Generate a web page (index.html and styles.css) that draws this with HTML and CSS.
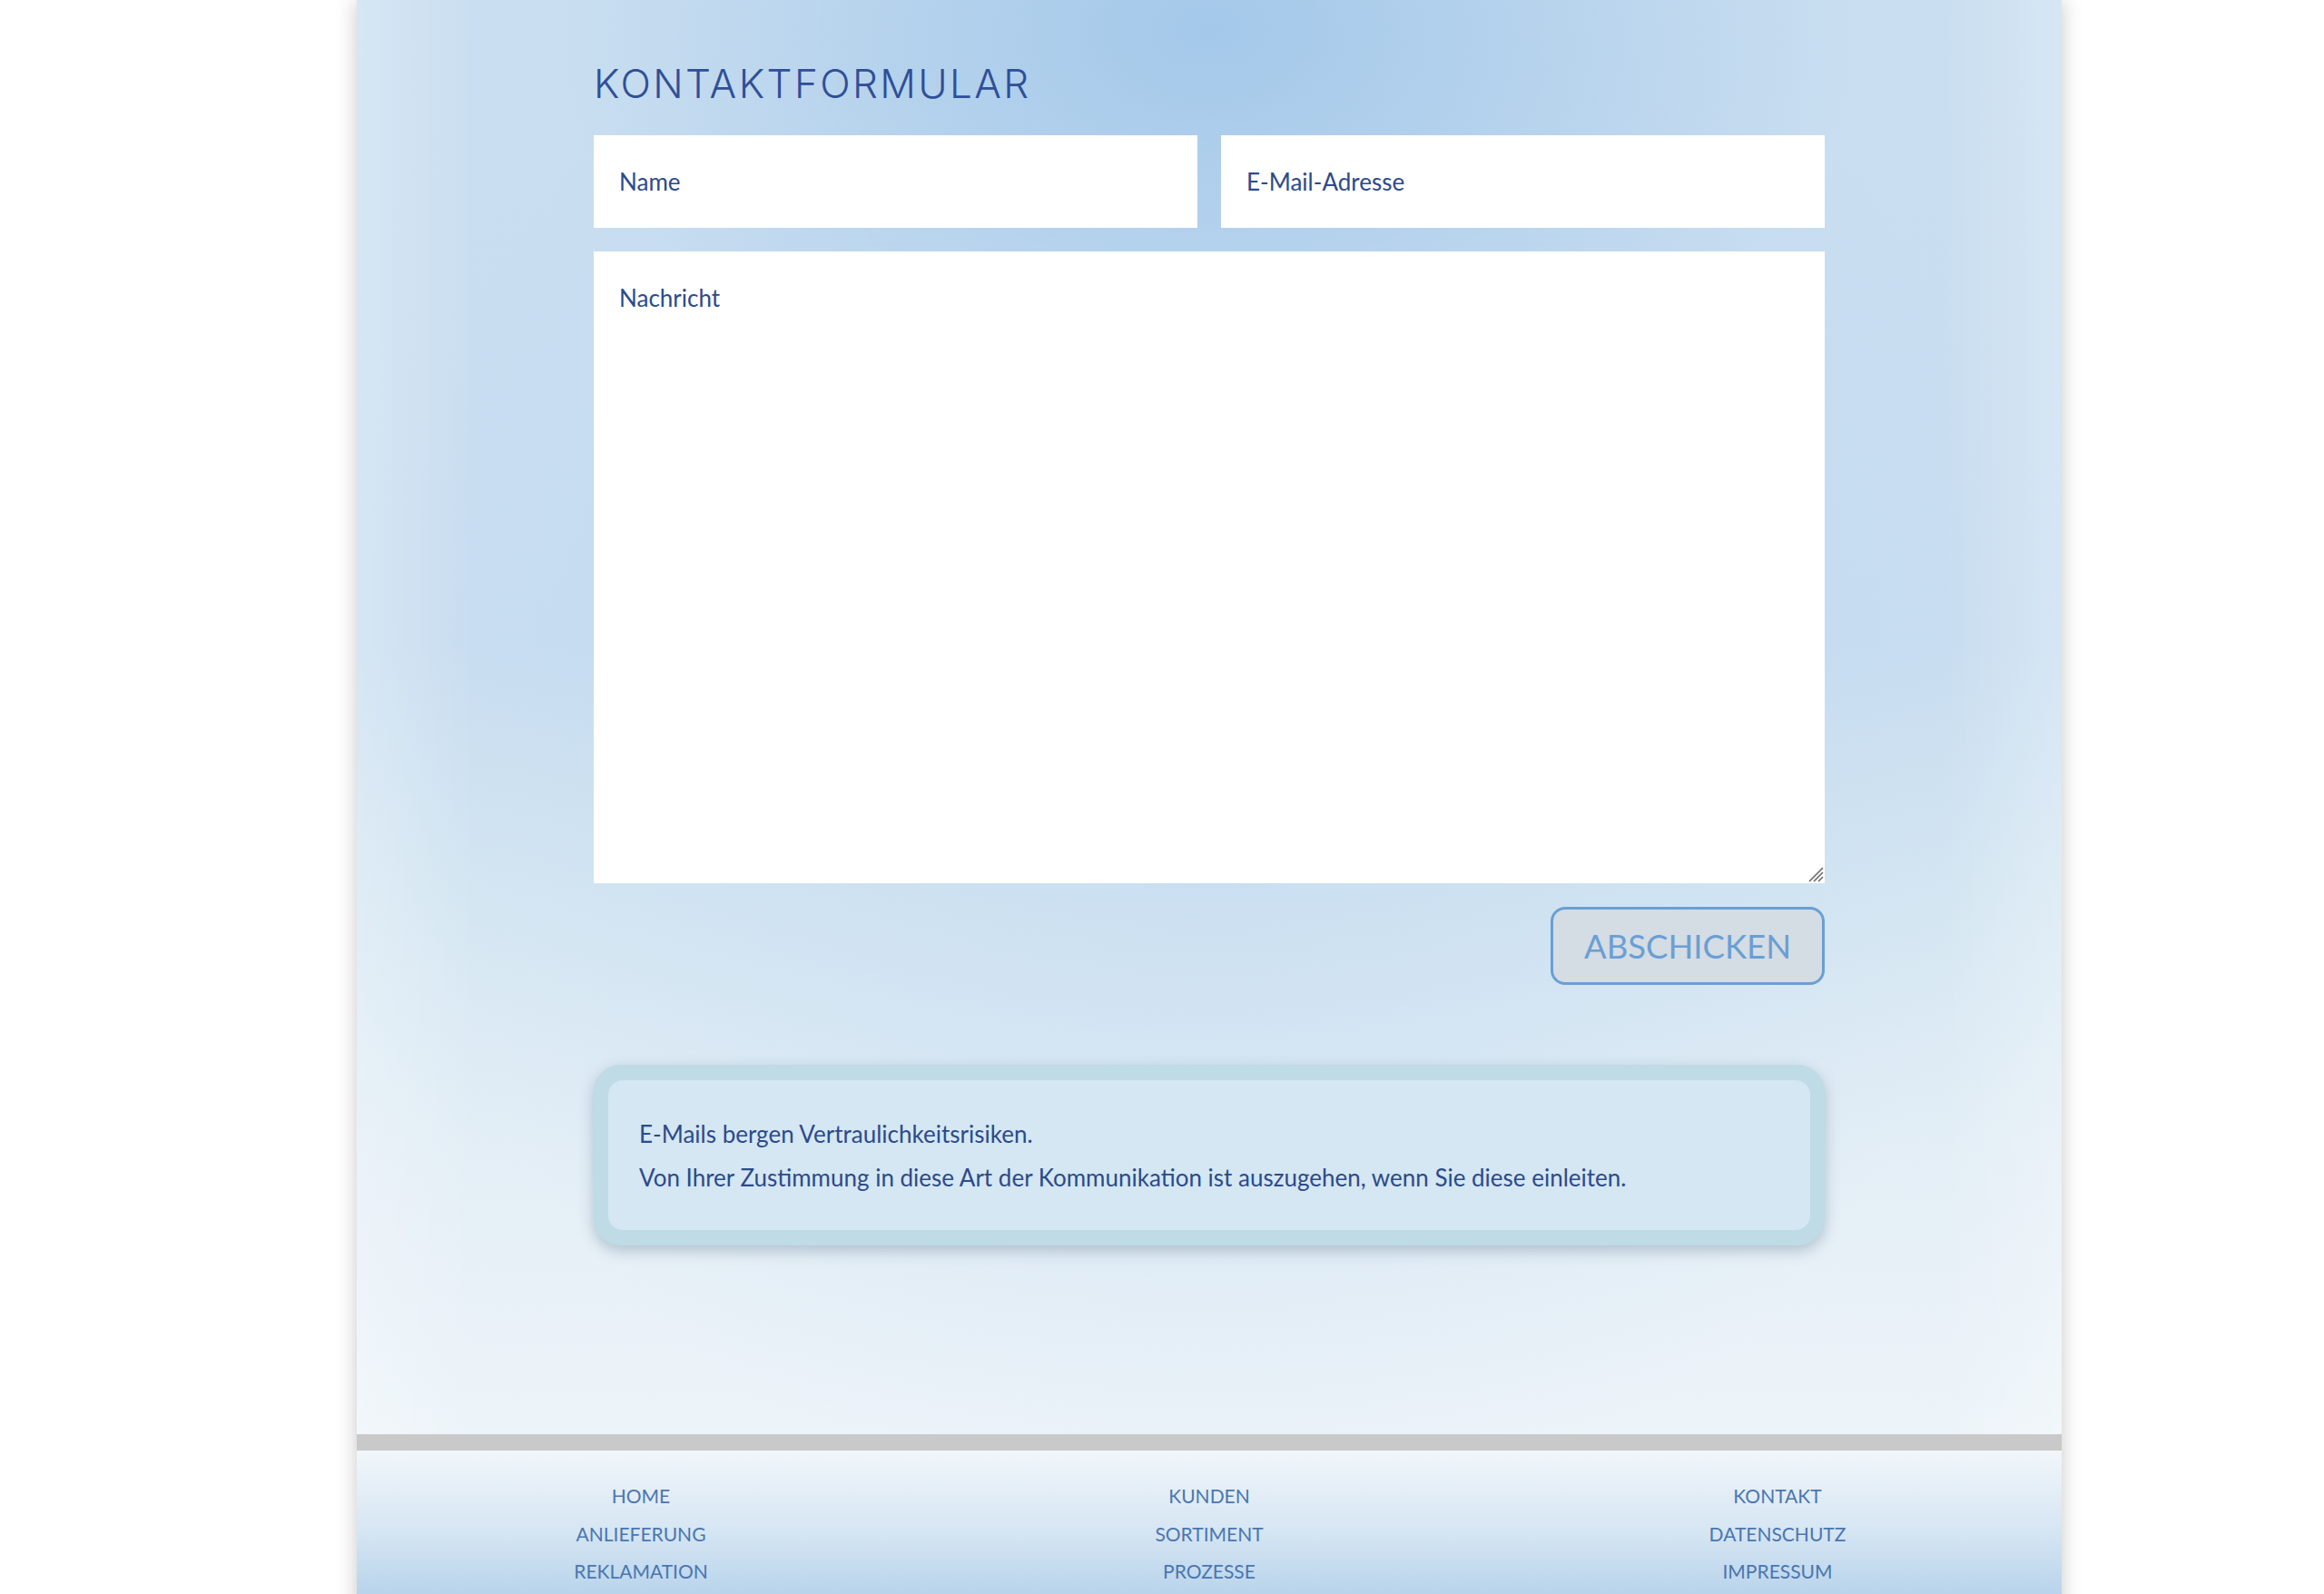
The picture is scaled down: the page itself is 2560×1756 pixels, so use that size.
FILE: index.html
```html
<!DOCTYPE html>
<html lang="de">
<head>
    <meta charset="UTF-8">
    <meta name="viewport" content="width=device-width, initial-scale=1.0">
    <title>Kontakt</title>
    <link rel="stylesheet" href="styles.css">
</head>
<body>
    <div class="page">
        <main class="panel">
            <h1>Kontaktformular</h1>
            <form class="contact-form" onsubmit="return false;">
                <div class="row">
                    <input type="text" name="name" placeholder="Name">
                    <input type="email" name="email" placeholder="E-Mail-Adresse">
                </div>
                <div class="message-box">
                    <textarea name="message" placeholder="Nachricht"></textarea>
                    <!-- resize grip -->
                    <svg class="grip" width="22" height="22" viewBox="0 0 22 22">
                        <path d="M21 6 L6 21 M21 11 L11 21 M21 16 L16 21" stroke="#6b6b6b" stroke-width="1.6" fill="none"/>
                    </svg>
                </div>
                <div class="actions">
                    <button type="submit">Abschicken</button>
                </div>
            </form>

            <div class="notice">
                <div class="notice-inner">
                    <p>E-Mails bergen Vertraulichkeitsrisiken.</p>
                    <p>Von Ihrer Zustimmung in diese Art der Kommunikation ist auszugehen, wenn Sie diese einleiten.</p>
                </div>
            </div>
        </main>

        <footer class="site-footer">
            <ul>
                <li><a href="#">Home</a></li>
                <li><a href="#">Anlieferung</a></li>
                <li><a href="#">Reklamation</a></li>
            </ul>
            <ul>
                <li><a href="#">Kunden</a></li>
                <li><a href="#">Sortiment</a></li>
                <li><a href="#">Prozesse</a></li>
            </ul>
            <ul>
                <li><a href="#">Kontakt</a></li>
                <li><a href="#">Datenschutz</a></li>
                <li><a href="#">Impressum</a></li>
            </ul>
        </footer>
    </div>
</body>
</html>
```

FILE: styles.css
```css
body {
    margin: 0;
    background-color: #ffffff;
    font-family: Lato, "Open Sans", sans-serif;
    color: #2d4a8a;
    overflow: hidden;
}

.page {
    width: 1878px;
    margin-left: 393px;
    background-color: #c9c9c9;
    box-shadow: 0 0 22px rgba(0,0,0,0.22);
}

.panel {
    padding: 66px 261px 208px;
    background:
        linear-gradient(90deg, rgba(255,255,255,0.25) 0, rgba(255,255,255,0) 7%, rgba(255,255,255,0) 93%, rgba(255,255,255,0.25) 100%),
        radial-gradient(ellipse 38% 30% at 50% 2%, rgba(160,198,233,0.9), rgba(160,198,233,0)),
        radial-gradient(ellipse 48% 60% at 50% 48%, rgba(180,208,238,0.4), rgba(180,208,238,0)),
        linear-gradient(180deg, #c9def0 0%, #c8ddf0 45%, #d4e6f2 62%, #e3eef6 80%, #edf4f9 100%);
}

h1 {
    margin: 0 0 30px;
    font-family: Inter, "Open Sans", sans-serif;
    font-weight: 300;
    font-size: 44px;
    line-height: 53px;
    letter-spacing: 2.4px;
    text-transform: uppercase;
    color: #2f4f98;
}

.contact-form .row {
    display: flex;
    gap: 26px;
    margin-bottom: 26px;
}

.contact-form input,
.contact-form textarea {
    flex: 1;
    box-sizing: border-box;
    border: none;
    background: #ffffff;
    font-family: Lato, sans-serif;
    font-size: 26px;
    line-height: 30px;
    color: #2d4a8a;
    padding: 36px 28px;
    outline: none;
}

.contact-form input {
    height: 102px;
}

.message-box {
    position: relative;
}

.contact-form textarea {
    display: block;
    width: 100%;
    height: 696px;
    padding-top: 36px;
    resize: none;
}

.grip {
    position: absolute;
    right: 1px;
    bottom: 1px;
}

.contact-form ::placeholder {
    color: #2d4a8a;
    opacity: 1;
}

.actions {
    display: flex;
    justify-content: flex-end;
    margin-top: 26px;
}

.actions button {
    width: 302px;
    height: 86px;
    border: 3px solid #6a9fd3;
    border-radius: 16px;
    background-color: #d4dce4;
    color: #6a9fd3;
    font-family: Lato, sans-serif;
    font-size: 36.5px;
    text-transform: uppercase;
    cursor: pointer;
}

.notice {
    margin-top: 88px;
    padding: 17px 16px;
    border-radius: 30px;
    background-color: #bedbe6;
    box-shadow: 0 6px 16px rgba(60,90,110,0.3);
}

.notice-inner {
    padding: 35px 34px 34px;
    border-radius: 16px;
    background-color: #d4e7f3;
}

.notice p {
    margin: 0;
    font-size: 26px;
    line-height: 48px;
    color: #2d4a8a;
}

.site-footer {
    display: grid;
    grid-template-columns: repeat(3, 1fr);
    margin-top: 18px;
    padding: 29px 0 40px;
    background: linear-gradient(180deg, #f1f6fa 0%, #d6e6f3 45%, #b6d2eb 85%, #b0cfea 100%);
}

.site-footer ul {
    list-style: none;
    margin: 0;
    padding: 0;
    text-align: center;
}

.site-footer li {
    font-size: 21px;
    line-height: 41.6px;
}

.site-footer a {
    color: #4a76b0;
    text-decoration: none;
    text-transform: uppercase;
}
```
